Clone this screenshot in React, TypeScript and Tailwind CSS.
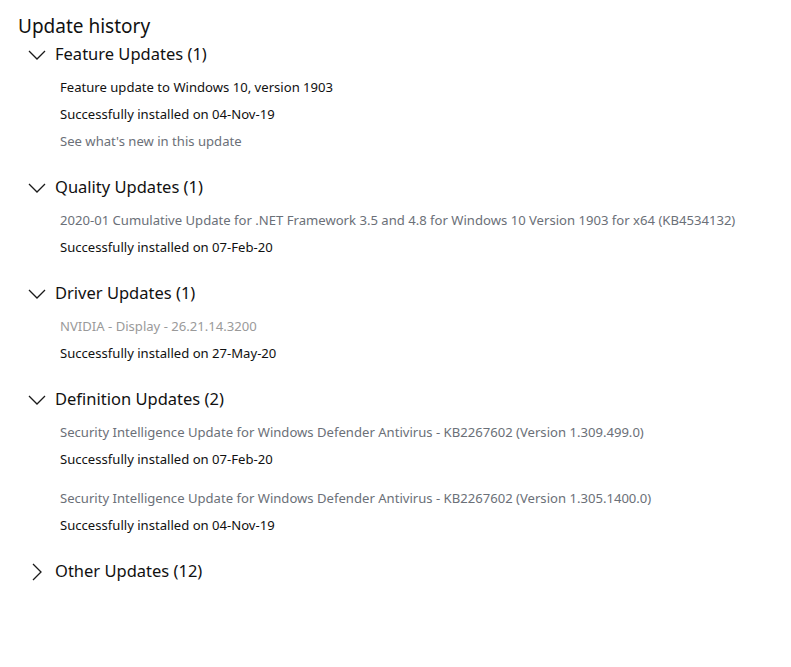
import React from "react";

const Down = () => (
  <svg width="18" height="10" viewBox="0 0 18 10" fill="none" stroke="#1a1a1a" strokeWidth="1.3">
    <path d="M1 1 L9 9 L17 1" />
  </svg>
);
const Right = () => (
  <svg width="10" height="18" viewBox="0 0 10 18" fill="none" stroke="#1a1a1a" strokeWidth="1.3">
    <path d="M1 1 L9 9 L1 17" />
  </svg>
);

type Entry = { title: string; tone: "black" | "link" | "faint"; status: string; extra?: string };

const Section = ({ name, open = true, entries = [] as Entry[][], last = false }: { name: string; open?: boolean; entries?: Entry[][]; last?: boolean }) => (
  <div className={last ? "" : "mb-[19px]"}>
    <div className="flex h-[27px] items-center">
      {open ? (
        <div className="ml-[28px] mr-[9px] flex w-[18px] justify-center">
          <Down />
        </div>
      ) : (
        <div className="ml-[32px] mr-[13px] flex w-[10px] justify-center">
          <Right />
        </div>
      )}
      <span className="text-[16.5px] text-[#111]">{name}</span>
    </div>
    {open && (
      <div className="mt-[6px] flex flex-col gap-[12px] pl-[60px]">
        {entries.map((group, gi) => (
          <div key={gi} className="flex flex-col">
            {group.map((e, i) => (
              <div key={i} className="flex flex-col">
                <div
                  className={
                    "flex h-[27px] items-center text-[13.1px] " +
                    (e.tone === "black" ? "text-[#111]" : e.tone === "link" ? "text-[#6b7078]" : "text-[#9a9a9a]")
                  }
                >
                  {e.title}
                </div>
                <div className="flex h-[27px] items-center text-[13.1px] text-[#111]">{e.status}</div>
                {e.extra && <div className="flex h-[27px] items-center text-[13.1px] text-[#6b7078]">{e.extra}</div>}
              </div>
            ))}
          </div>
        ))}
      </div>
    )}
  </div>
);

export default function App() {
  return (
    <div className="min-h-[667px] w-[791px] bg-white pt-[11px]" style={{ fontFamily: '"Noto Sans", "Open Sans", sans-serif' }}>
      <div className="flex h-[30px] items-center pl-[18px] text-[19px] text-[#111]">Update history</div>
      <Section
        name="Feature Updates (1)"
        entries={[[{ title: "Feature update to Windows 10, version 1903", tone: "black", status: "Successfully installed on 04-Nov-19", extra: "See what's new in this update" }]]}
      />
      <Section
        name="Quality Updates (1)"
        entries={[[{ title: "2020-01 Cumulative Update for .NET Framework 3.5 and 4.8 for Windows 10 Version 1903 for x64 (KB4534132)", tone: "link", status: "Successfully installed on 07-Feb-20" }]]}
      />
      <Section
        name="Driver Updates (1)"
        entries={[[{ title: "NVIDIA - Display - 26.21.14.3200", tone: "faint", status: "Successfully installed on 27-May-20" }]]}
      />
      <Section
        name="Definition Updates (2)"
        entries={[
          [{ title: "Security Intelligence Update for Windows Defender Antivirus - KB2267602 (Version 1.309.499.0)", tone: "link", status: "Successfully installed on 07-Feb-20" }],
          [{ title: "Security Intelligence Update for Windows Defender Antivirus - KB2267602 (Version 1.305.1400.0)", tone: "link", status: "Successfully installed on 04-Nov-19" }],
        ]}
      />
      <Section name="Other Updates (12)" open={false} last />
    </div>
  );
}
